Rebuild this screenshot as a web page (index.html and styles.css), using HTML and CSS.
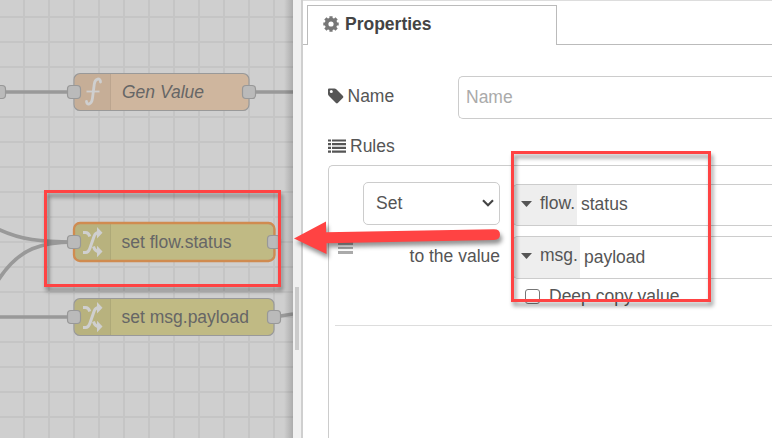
FILE: index.html
```html
<!DOCTYPE html>
<html lang="en">
<head>
<meta charset="utf-8">
<title>Edit change node</title>
<link rel="stylesheet" href="styles.css">
</head>
<body>
<div class="editor">
  <section class="workspace">
    <svg class="flow" width="293" height="438" viewBox="0 0 293 438">
      <defs>
        <linearGradient id="edge"><stop offset="0" stop-color="#000" stop-opacity="0"/><stop offset="1" stop-color="#000" stop-opacity=".17"/></linearGradient>
        <g id="shuffle" class="glyph">
          <path d="M0 25.500H2.500C5 25.500 6 24 7 21L11 9.500C12 6.500 13 5.500 16 5.500M0 5.500H2.500Q5.500 5.500 6.800 9.500M10.500 19.500Q12 24.500 16 24.500" fill="none"/>
          <path d="M14 0L19.500 5.700L14 11.500ZM14 18.800L19.500 24.500L14 30.300Z" stroke="none"/>
        </g>
      </defs>
      <path class="grid-line" d="M24 0V438M49 0V438M74 0V438M99 0V438M124 0V438M149 0V438M174 0V438M199 0V438M224 0V438M249 0V438M274 0V438M0 17H293M0 42H293M0 67H293M0 92H293M0 117H293M0 142H293M0 167H293M0 192H293M0 217H293M0 242H293M0 267H293M0 292H293M0 317H293M0 342H293M0 367H293M0 392H293M0 417H293"/>
      <path class="wire" d="M0 92H74M249 92H293M-4 228C20 240 42 242 74 242M-4 284C18 246 45 242 74 242M0 317H74M274 317L293 314"/>

      <rect class="node function" x="74" y="73.500" width="175" height="37" rx="6"/>
      <path class="shade" d="M80 74H110V110H80Q75 110 75 105V79Q75 74 80 74Z"/>
      <path class="divider" d="M110.500 74V110"/>
      <path class="glyph-f" d="M100.500 82C100.500 77.500 95 78 94.300 84L92.500 98C91.700 105 86.500 105.500 86.500 101.500"/>
      <path class="glyph-f bar" d="M86.500 91.500H99.500"/>
      <text class="node-label italic" x="122" y="98">Gen Value</text>

      <rect class="node change" x="74" y="223.500" width="200" height="37" rx="6"/>
      <path class="shade" d="M80 224H110V260H80Q75 260 75 255V229Q75 224 80 224Z"/>
      <path class="divider" d="M110.500 224V260"/>
      <rect class="selected" x="74" y="223" width="200.500" height="38" rx="6"/>
      <use href="#shuffle" transform="translate(83 227)"/>
      <text class="node-label" x="121.500" y="248">set flow.status</text>

      <rect class="node change" x="74" y="298.500" width="200" height="37" rx="6"/>
      <path class="shade" d="M80 299H110V335H80Q75 335 75 330V304Q75 299 80 299Z"/>
      <path class="divider" d="M110.500 299V335"/>
      <use href="#shuffle" transform="translate(83 302)"/>
      <text class="node-label" x="121.500" y="323">set msg.payload</text>

      <g class="port">
        <rect x="-7.500" y="85.500" width="13" height="13" rx="3.500"/>
        <rect x="67.500" y="85.500" width="13" height="13" rx="3.500"/>
        <rect x="242.500" y="85.500" width="13" height="13" rx="3.500"/>
        <rect x="67.500" y="235.500" width="13" height="13" rx="3.500"/>
        <rect x="267.500" y="235.500" width="13" height="13" rx="3.500"/>
        <rect x="67.500" y="310.500" width="13" height="13" rx="3.500"/>
        <rect x="267.500" y="310.500" width="13" height="13" rx="3.500"/>
      </g>
      <rect x="284" y="0" width="9" height="438" fill="url(#edge)"/>
    </svg>
  </section>
  <div class="separator"><div class="grip"></div></div>
  <section class="panel">
    <nav class="tabs">
      <div class="tab">
        <svg width="16" height="16" viewBox="0 0 16 16"><circle cx="8" cy="8" r="4.400" fill="none" stroke="#777" stroke-width="3.600"/><path d="M8 .3V3M8 13V15.700M.3 8H3M13 8H15.700M2.400 2.400L4 4M12 12L13.600 13.600M2.400 13.600L4 12M12 4L13.600 2.400" stroke="#777" stroke-width="3.200"/></svg>
        <span>Properties</span>
      </div>
    </nav>
    <div class="row name-row">
      <label class="caption"><svg width="16" height="16" viewBox="0 0 16 16"><path fill="#555" fill-rule="evenodd" d="M0 1.500Q0 .5 1 .5H6.500Q7.500.5 8.300 1.300L15 8Q15.800 8.900 15 9.800L9.800 15Q8.900 15.800 8 15L1 8Q0 7 0 6ZM3.300 2A1.500 1.500 0 1 0 3.300 5A1.500 1.500 0 1 0 3.300 2Z"/></svg><span>Name</span></label>
      <div class="input">Name</div>
    </div>
    <div class="caption rules-caption"><svg width="18" height="14" viewBox="0 0 18 14"><path d="M0 1.500H3M4 1.500H18M0 5.200H3M4 5.200H18M0 8.900H3M4 8.900H18M0 12.600H3M4 12.600H18" stroke="#555" stroke-width="2.200"/></svg><span>Rules</span></div>
    <div class="rules">
      <div class="rule">
        <div class="handle"><i></i><i></i><i></i></div>
        <div class="operation">
          <div class="select"><span>Set</span><svg width="12" height="8" viewBox="0 0 12 8"><path d="M1 1.200L6 6.200L11 1.200" fill="none" stroke="#444" stroke-width="2.100"/></svg></div>
          <div class="to">to the value</div>
        </div>
        <div class="values">
          <div class="typed"><div class="type flow-type"><b></b>flow.</div><span>status</span></div>
          <div class="typed second"><div class="type msg-type"><b></b>msg.</div><span>payload</span></div>
          <div class="copy"><i></i><span>Deep copy value</span></div>
        </div>
      </div>
    </div>
  </section>
</div>
<svg class="annotations" width="772" height="438" viewBox="0 0 772 438">
  <g class="mark">
    <rect x="45.500" y="191.500" width="234" height="94"/>
    <rect x="512.500" y="152.500" width="197" height="148"/>
    <path d="M294 238.500L326 221.500V232.300L494 229.200Q500 229.200 500 234.600Q500 240 494 240L326.500 243.300V254Z"/>
  </g>
</svg>
</body>
</html>
```
FILE: styles.css
```css
* { box-sizing: border-box; }
body {
  margin: 0;
  overflow: hidden;
  background: #fff;
  color: #555;
  font: 17.5px/24px "Liberation Sans", Arial, sans-serif;
}
svg { display: block; flex: none; }
.editor { display: flex; width: 772px; height: 438px; }

.workspace { flex: 0 0 293px; background: #cfcfcf; }
.grid-line { stroke: #c5c5c5; stroke-width: 2; fill: none; }
.wire { stroke: #999; stroke-width: 3.6; fill: none; }
.node { stroke: #999; stroke-width: 1.2; }
.function { fill: #cfb69e; }
.change { fill: #c0ba84; }
.shade { fill: #000; fill-opacity: .04; }
.divider { stroke: #000; stroke-opacity: .09; }
.selected { fill: none; stroke: #d08b50; stroke-width: 2.3; }
.glyph { fill: #cfcfcf; stroke: #cfcfcf; stroke-width: 3; }
.glyph-f { fill: none; stroke: #cfcfcf; stroke-width: 2.8; stroke-linecap: round; }
.bar { stroke-width: 1.8; stroke-linecap: butt; }
.node-label { fill: #666; font-size: 17.5px; }
.italic { font-style: italic; }
.port { fill: #bababa; stroke: #989898; stroke-width: 1.2; }

.separator {
  flex: 0 0 10px;
  padding: 287px 0 0 2px;
  background: #f0f0f0;
  border-right: 2px solid #cfcfcf;
}
.grip { width: 4px; height: 63px; background: #cbcbcb; }

.panel { flex: 1; min-width: 0; border-top: 1px solid #ddd; }
.tabs { display: flex; height: 44px; padding-top: 4px; }
.tabs::before, .tabs::after { content: ""; border-bottom: 1px solid #bbb; }
.tabs::before { width: 4px; }
.tabs::after { flex: 1; }
.tab {
  display: flex;
  align-items: center;
  gap: 6px;
  width: 250px;
  padding: 0 0 3px 15px;
  border: 1px solid #bbb;
  border-bottom: 0;
  color: #444;
  font-weight: bold;
}
.row { display: flex; padding-left: 25px; }
.name-row { margin-top: 31px; height: 43px; }
.caption { display: flex; align-items: center; gap: 4px; }
.name-row .caption { width: 130px; padding-bottom: 4px; }
.name-row .caption span { margin-left: -.5px; }
.input {
  flex: 1;
  padding: 8px 7px;
  border: 1px solid #ccc;
  border-right: 0;
  border-radius: 5px 0 0 5px;
  color: #aaa;
}
.rules-caption { height: 24px; margin: 15px 0 7px 25px; }
.rules {
  height: 290px;
  margin-left: 25px;
  border: 1px solid #ccc;
  border-right: 0;
  border-radius: 5px 0 0 0;
}
.rule {
  display: flex;
  height: 160px;
  margin-left: 6px;
  padding-top: 16px;
  border-bottom: 1px solid #ddd;
}
.handle { display: flex; flex-direction: column; gap: 2px; width: 28px; padding: 60px 0 0 3px; }
.handle i { width: 15px; height: 2.7px; background: #aaa; }
.operation { width: 137px; }
.select {
  display: flex;
  align-items: center;
  justify-content: space-between;
  height: 43px;
  padding: 0 5px 2px 12px;
  border: 1px solid #ccc;
  border-radius: 5px;
}
.to { margin-top: 19px; text-align: right; }
.values { flex: 1; min-width: 0; padding: 2px 0 0 13px; }
.typed {
  display: flex;
  height: 42px;
  border: 1px solid #ccc;
  border-right: 0;
  border-radius: 5px 0 0 5px;
  overflow: hidden;
}
.typed span { padding: 7px 0 0 4px; }
.type { display: flex; gap: 8px; padding: 6px 0 0 7px; background: #eee; }
.flow-type { width: 63px; }
.msg-type { width: 66px; }
.type b {
  margin-top: 10px;
  width: 11px;
  height: 6px;
  background: #555;
  clip-path: polygon(0 0, 100% 0, 50% 100%);
}
.second { margin-top: 10px; height: 43px; }
.second span { padding: 8px 0 0 4px; }
.copy { display: flex; gap: 9px; padding: 5px 0 0 12px; }
.copy i { width: 15px; height: 15px; margin-top: 5px; border: 1px solid #767676; border-radius: 3px; }

.annotations { position: absolute; inset: 0; }
.mark { filter: drop-shadow(2px 4px 2.2px rgba(0, 0, 0, .42)); }
.mark rect { fill: none; stroke: #ff4343; stroke-width: 3; }
.mark path { fill: #ff4343; }
```
